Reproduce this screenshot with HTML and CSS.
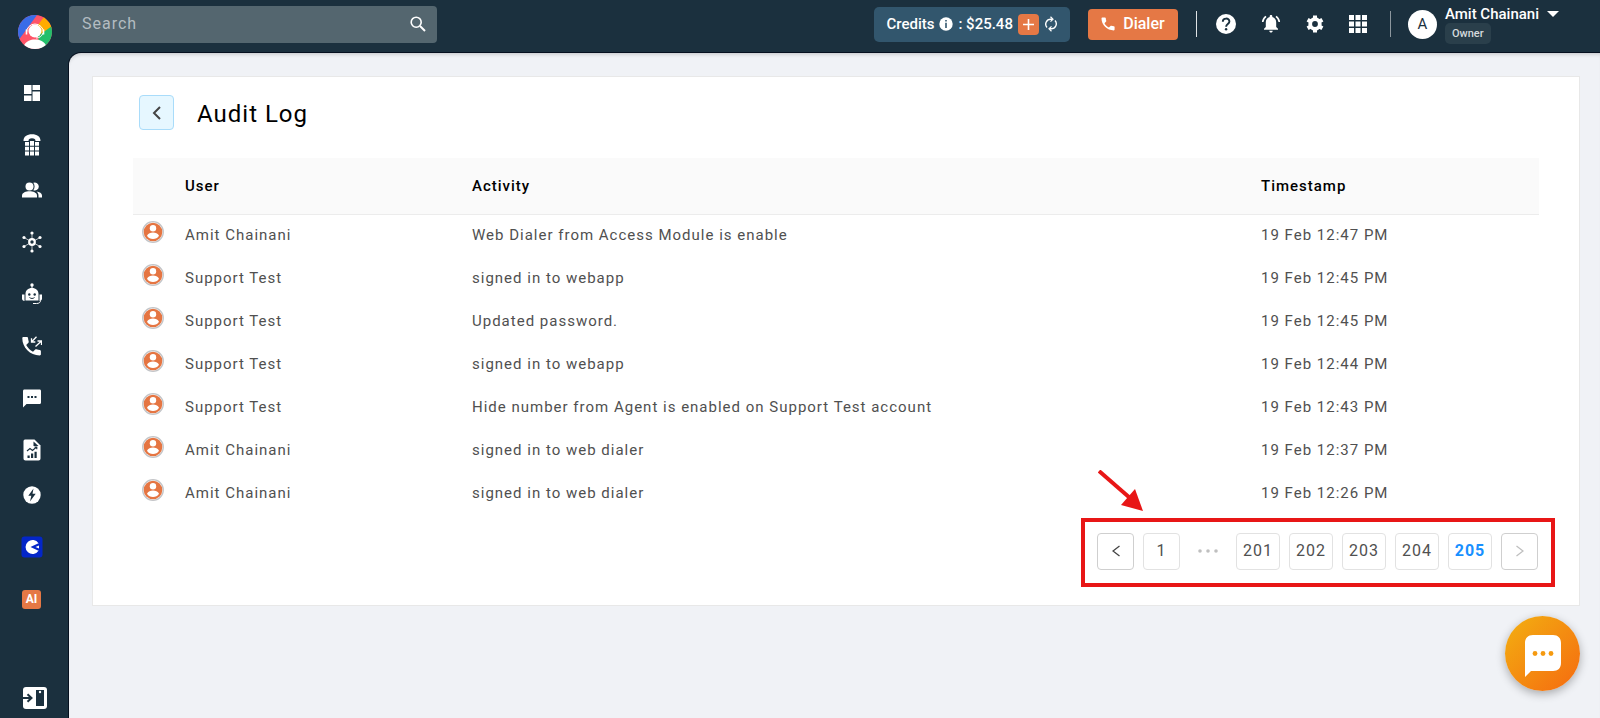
FILE: index.html
```html
<!DOCTYPE html>
<html lang="en">
<head>
    <meta charset="UTF-8">
    <meta name="viewport" content="width=device-width, initial-scale=1">
    <title>Audit Log</title>
    <link rel="stylesheet" href="styles.css">
</head>
<body>
    <!-- shared icons -->
    <svg class="sprite" aria-hidden="true">
        <symbol id="user" viewBox="0 0 22 22">
            <circle cx="11" cy="11" r="10.300" fill="#fff" stroke="#c3c5c8" stroke-width="1.300"/>
            <circle cx="11" cy="11" r="9.300" fill="#e57542"/>
            <circle cx="11" cy="7.200" r="3.200" fill="#fff"/>
            <path d="M5 14.800c1-2.300 3.600-3.200 6-3.200s5 .9 6 3.200c-1.300 2.100-3.500 3.200-6 3.200s-4.700-1.100-6-3.200z" fill="#fff"/>
        </symbol>
    </svg>

    <div class="layout">
        <!-- sidebar -->
        <aside class="sidebar">
            <a class="logo" href="#" aria-label="Home">
                <svg width="34" height="34" viewBox="0 0 34 34">
                    <defs><clipPath id="round"><circle cx="17" cy="17" r="17"/></clipPath></defs>
                    <g clip-path="url(#round)">
                        <path d="M0 0h34v34H0z" fill="#ff5468"/>
                        <path d="M0 0h19L0 26z" fill="#3a6ce8"/>
                        <path d="M26 2l8 8v3L20 22l-3-8z" fill="#ffab00"/>
                        <path d="M34 11v23H22l-2-13z" fill="#23bf6b"/>
                        <path d="M5 34c1-7 6-9.500 12-9.500S28 27 29 34z" fill="#fff"/>
                    </g>
                    <circle cx="17" cy="16" r="6.500" fill="#fff"/>
                    <path d="M8.500 17.500a8.500 8.500 0 0 1 17 0M25 18c-1 3.500-4 5-7 5" fill="none" stroke="#fff" stroke-width="1"/>
                    <path d="M8.500 14.500v5M25.500 14.500v5" stroke="#fff" stroke-width="1.600"/>
                </svg>
            </a>
            <nav class="menu">
                <a href="#" aria-label="Dashboard">
                    <svg width="18" height="18" viewBox="0 0 18 18" fill="#fff"><path d="M1 1h7.500v9H1zM9.500 1H17v5H9.500zM1 11.500h7.500V17H1zM9.500 7.500H17V17H9.500z"/></svg>
                </a>
                <a href="#" aria-label="Numbers">
                    <svg width="18" height="22" viewBox="0 0 18 22" fill="#fff">
                        <path d="M.5 7C.5 2.500 4 .3 9 .3S17.500 2.500 17.500 7h-5c0-1.700-1-2.700-3.500-2.700S5.500 5.300 5.500 7z"/>
                        <path d="M2 8h4v3.800H2zM7 7h4v4.800H7zM12 8h4v3.800h-4zM2 12.800h4v3.700H2zM7 12.800h4v3.700H7zM12 12.800h4v3.700h-4zM2 17.600h4v3.900H2zM7 17.600h4v3.900H7zM12 17.600h4v3.900h-4z"/>
                    </svg>
                </a>
                <a class="close" href="#" aria-label="Users">
                    <svg width="20" height="16" viewBox="0 0 20 16" fill="#fff">
                        <circle cx="7.500" cy="4.500" r="4"/>
                        <path d="M0 15.500v-2c0-2.800 4-4.200 7.500-4.200s7.500 1.400 7.500 4.200v2z"/>
                        <path d="M11.300.8a4 4 0 1 1 0 7.400c1.700-2.300 1.700-5.100 0-7.400zM14.500 9.600c3 .5 5.500 1.800 5.500 3.900v2h-3.500v-2c0-1.700-.8-2.900-2-3.900z"/>
                    </svg>
                </a>
                <a href="#" aria-label="Integrations">
                    <svg width="22" height="22" viewBox="0 0 22 22" stroke="#fff" fill="#fff">
                        <path d="M11 2v18M3 6.500l16 9M3 15.500l16-9" stroke-width=".7"/>
                        <circle cx="11" cy="11" r="2.800" fill="#1b303e" stroke-width="2.200"/>
                        <g stroke="none"><circle cx="11" cy="2" r="1.600"/><circle cx="11" cy="20" r="1.600"/><circle cx="3" cy="6.500" r="1.600"/><circle cx="19" cy="15.500" r="1.600"/><circle cx="3" cy="15.500" r="1.600"/><circle cx="19" cy="6.500" r="1.600"/></g>
                    </svg>
                </a>
                <a href="#" aria-label="Bot">
                    <svg width="20" height="22" viewBox="0 0 20 22" fill="#fff">
                        <circle cx="10" cy="2" r="1.700"/><path d="M9.500 3h1v3h-1z"/>
                        <path d="M3.500 17.500V11C3.500 7.500 6 5 10 5s6.500 2.500 6.500 6v6.500zM0 11.500h2.500V18C1 18 0 17 0 15.800zM17.500 11.500H20v4.300c0 1.200-1 2.200-2.500 2.200z"/>
                        <circle cx="7.300" cy="11.500" r="1.200" fill="#1b303e"/><circle cx="12.700" cy="11.500" r="1.200" fill="#1b303e"/>
                        <path d="M7.500 14.500c1.500 1.300 3.500 1.300 5 0" fill="none" stroke="#1b303e"/>
                        <path d="M18.500 17.500c0 2-1.500 3-4 3H11" fill="none" stroke="#fff"/>
                    </svg>
                </a>
                <a href="#" aria-label="Calls">
                    <svg width="20" height="20" viewBox="0 0 20 20" fill="#fff">
                        <path d="M.3 2.200c0-.7.500-1.200 1.200-1.200h3.300c.6 0 1.100.4 1.200 1 .1 1.300.4 2.400.7 3.500.2.500 0 1-.3 1.300L4.200 9c1.600 3 4 5.300 6.800 6.800l2.200-2.200c.3-.3.8-.4 1.300-.3 1.100.4 2.300.6 3.400.7.600.1 1 .6 1 1.200v3c0 .7-.5 1.200-1.200 1.200C8 19.400.3 11.500.3 2.200z"/>
                        <path d="M14.500.8L9.500 6M9.500 2.200V6h3.800M13.500 10.500l6-5.500M15.500 5h4v4" fill="none" stroke="#fff" stroke-width="1.300"/>
                    </svg>
                </a>
                <a href="#" aria-label="Messages">
                    <svg width="20" height="19" viewBox="0 0 20 19"><path d="M2.500.5h15c1 0 1.500.6 1.500 1.500v11.500c0 .9-.5 1.500-1.500 1.500H4.500L1 18.500V2C1 1.100 1.500.5 2.500.5z" fill="#fff"/><path d="M5.500 7h2v2h-2zM9 7h2v2H9zM12.500 7h2v2h-2z" fill="#1b303e"/></svg>
                </a>
                <a href="#" aria-label="Reports">
                    <svg width="18" height="22" viewBox="0 0 18 22"><path d="M2 .5h9.500l6 6V19.500c0 1.200-.8 2-2 2H2.500c-1.200 0-2-.8-2-2v-17C.5 1.300 1 .5 2 .5z" fill="#fff"/><path d="M10.500 2.500v4.500h5z" fill="#1b303e"/><path d="M4 12l3-2.500 2.500 2L13.500 8M11.500 8h2.300v2.300" fill="none" stroke="#1b303e" stroke-width="1.100"/><path d="M4.500 16.500h2.200V19H4.500zM8 14.500h2.200V19H8zM11.500 12.800h2.200V19h-2.200z" fill="#1b303e"/></svg>
                </a>
                <a class="close" href="#" aria-label="Power">
                    <svg width="18" height="18" viewBox="0 0 18 18"><circle cx="9" cy="9" r="8.700" fill="#fff"/><path d="M10.500 2.500L5.300 9.800h3L7 15.500l5.700-7.800H9.500z" fill="#1b303e"/></svg>
                </a>
                <a href="#" aria-label="Workspace">
                    <svg width="22" height="22" viewBox="0 0 22 22"><rect x=".5" y=".5" width="21" height="21" rx="3" fill="#0426c8"/><path d="M17.500 7.300A7 7 0 1 0 17.500 14.700L12 11z" fill="#fff"/><path d="M10 11l3-2.500 2-1.500h3v8h-3l-2-1.500z" fill="#fff"/><path d="M9.500 11l8.500-4v2.500L14.500 11l3.500 1.500V15z" fill="#0426c8"/></svg>
                </a>
                <a href="#"><span class="ai">AI</span></a>
            </nav>
            <button class="expand" type="button" aria-label="Expand menu">
                <svg width="24" height="22" viewBox="0 0 24 22"><rect width="24" height="22" rx="3" fill="#fff"/><rect x="13" y="3" width="8" height="16" fill="#1b303e"/><circle cx="17" cy="5" r="1.200" fill="#fff"/><path d="M0 11h8M4.500 7.200L8.500 11l-4 3.800" fill="none" stroke="#1b303e" stroke-width="2"/></svg>
            </button>
        </aside>

        <div class="page">
            <!-- top bar -->
            <header class="topbar">
                <form class="search" role="search">
                    <input type="search" placeholder="Search" aria-label="Search">
                    <button type="button" aria-label="Search">
                        <svg width="16" height="16" viewBox="0 0 16 16" fill="none" stroke="#fff"><circle cx="6.200" cy="6.200" r="5" stroke-width="1.600"/><path d="M10 10l5 5" stroke-width="2"/></svg>
                    </button>
                </form>

                <div class="credits">
                    <span>Credits</span>
                    <svg width="14" height="14" viewBox="0 0 14 14"><circle cx="7" cy="7" r="6.700" fill="#fff"/><path d="M6.200 3h1.600v1.600H6.200zM6.200 5.700h1.600V11H6.200z" fill="#32566d"/></svg>
                    <span>: $25.48</span>
                    <button class="add" type="button" aria-label="Add credits">
                        <svg width="13" height="13" viewBox="0 0 13 13" stroke="#fff" stroke-width="1.600"><path d="M6.500 1v11M1 6.500h11"/></svg>
                    </button>
                    <button type="button" aria-label="Refresh">
                        <svg width="14" height="16" viewBox="0 0 14 16" fill="none" stroke="#fff" stroke-width="1.400"><path d="M3 11.500A5 5 0 0 1 7 3.200h1M11 4.500a5 5 0 0 1-4 8.300H6"/><path d="M6.500.8L9 3.200 6.500 5.600M7.500 10.400L5 12.800l2.500 2.400" stroke-width="1.200"/></svg>
                    </button>
                </div>

                <button class="dialer" type="button">
                    <svg width="14" height="14" viewBox="0 0 14 14" fill="#fff"><path d="M.5 1.300C.5.900.8.500 1.300.5H4c.4 0 .7.300.8.700 0 1 .2 1.800.5 2.600.1.300 0 .6-.2.800L3.500 6.200c1.100 2.100 2.500 3.400 4.400 4.400l1.600-1.700c.2-.2.500-.3.800-.2.900.3 1.700.4 2.600.5.400 0 .7.300.7.700v2.700c0 .5-.3.800-.7.800C6 13.400.5 8 .5 1.300z"/></svg>
                    Dialer
                </button>

                <div class="tools">
                    <button type="button" aria-label="Help">
                        <svg width="20" height="20" viewBox="0 0 20 20"><circle cx="10" cy="10" r="10" fill="#fff"/><path d="M6.800 7.800c0-4.300 6.600-4.200 6.600-.3 0 2.500-3.300 2.600-3.300 5.300" fill="none" stroke="#1b303e" stroke-width="1.900"/><circle cx="10.100" cy="15.300" r="1.200" fill="#1b303e"/></svg>
                    </button>
                    <button type="button" aria-label="Notifications">
                        <svg width="20" height="20" viewBox="0 0 20 20" fill="#fff"><path d="M10 1c.8 0 1.300.5 1.300 1.300v.6c2.500.6 3.900 2.700 3.900 5.300v4.800l1.800 1.800v.9H3v-.9L4.800 13V8.200c0-2.600 1.400-4.700 3.900-5.300v-.6C8.700 1.500 9.200 1 10 1zM8.300 16.800h3.400c0 1-.7 1.800-1.700 1.800s-1.700-.8-1.700-1.800z"/><path d="M5 2.300C3 3.800 1.800 5.500 1.700 8M15 2.300c2 1.500 3.200 3.200 3.300 5.700" fill="none" stroke="#fff" stroke-width="1.600"/></svg>
                    </button>
                    <button type="button" aria-label="Settings">
                        <svg width="18" height="18" viewBox="0 0 18 18" fill="none"><circle cx="9" cy="9" r="4.800" stroke="#fff" stroke-width="3.800"/><path d="M9 .5v3M9 14.500v3M1.600 4.800l2.700 1.500M13.700 11.700l2.700 1.500M1.600 13.200l2.700-1.500M13.700 6.300l2.700-1.500" stroke="#fff" stroke-width="4"/></svg>
                    </button>
                    <button type="button" aria-label="Apps">
                        <svg width="18" height="18" viewBox="0 0 18 18" fill="#fff"><path d="M0 0h5v5H0zM6.500 0h5v5h-5zM13 0h5v5h-5zM0 6.500h5v5H0zM6.500 6.500h5v5h-5zM13 6.500h5v5h-5zM0 13h5v5H0zM6.500 13h5v5h-5zM13 13h5v5h-5z"/></svg>
                    </button>
                </div>

                <div class="account">
                    <span class="initial">A</span>
                    <div class="who">
                        <button type="button">Amit Chainani
                            <svg width="12" height="6" viewBox="0 0 12 6" fill="#fff"><path d="M0 0h12L6 6z"/></svg>
                        </button>
                        <span class="role">Owner</span>
                    </div>
                </div>
            </header>

            <!-- content -->
            <main class="main">
                <section class="card">
                    <div class="heading">
                        <button class="back" type="button" aria-label="Back">
                            <svg width="10" height="14" viewBox="0 0 10 14" fill="none" stroke="#444" stroke-width="2"><path d="M8 1L2 7l6 6"/></svg>
                        </button>
                        <h1>Audit Log</h1>
                    </div>

                    <table class="log">
                        <thead>
                            <tr><th class="pic"></th><th class="name">User</th><th>Activity</th><th class="time">Timestamp</th></tr>
                        </thead>
                        <tbody>
                            <tr><td class="pic"><svg width="22" height="22"><use href="#user"/></svg></td><td>Amit Chainani</td><td>Web Dialer from Access Module is enable</td><td>19 Feb 12:47 PM</td></tr>
                            <tr><td class="pic"><svg width="22" height="22"><use href="#user"/></svg></td><td>Support Test</td><td>signed in to webapp</td><td>19 Feb 12:45 PM</td></tr>
                            <tr><td class="pic"><svg width="22" height="22"><use href="#user"/></svg></td><td>Support Test</td><td>Updated password.</td><td>19 Feb 12:45 PM</td></tr>
                            <tr><td class="pic"><svg width="22" height="22"><use href="#user"/></svg></td><td>Support Test</td><td>signed in to webapp</td><td>19 Feb 12:44 PM</td></tr>
                            <tr><td class="pic"><svg width="22" height="22"><use href="#user"/></svg></td><td>Support Test</td><td>Hide number from Agent is enabled on Support Test account</td><td>19 Feb 12:43 PM</td></tr>
                            <tr><td class="pic"><svg width="22" height="22"><use href="#user"/></svg></td><td>Amit Chainani</td><td>signed in to web dialer</td><td>19 Feb 12:37 PM</td></tr>
                            <tr><td class="pic"><svg width="22" height="22"><use href="#user"/></svg></td><td>Amit Chainani</td><td>signed in to web dialer</td><td>19 Feb 12:26 PM</td></tr>
                        </tbody>
                    </table>

                    <nav class="pagination" aria-label="Pages">
                        <svg class="pointer" width="46" height="42" viewBox="0 0 46 42"><path d="M1 1l31 27" stroke="#e81616" stroke-width="4"/><path d="M45 41l-22-6L37 19z" fill="#e81616"/></svg>
                        <button class="step" type="button" aria-label="Previous">
                            <svg width="8" height="12" viewBox="0 0 8 12" fill="none" stroke="#444" stroke-width="1.300"><path d="M7.500 1L1 6l6.500 5"/></svg>
                        </button>
                        <button type="button">1</button>
                        <span class="dots">
                            <svg width="20" height="4" viewBox="0 0 20 4" fill="#bfbfbf"><circle cx="2" cy="2" r="1.800"/><circle cx="10" cy="2" r="1.800"/><circle cx="18" cy="2" r="1.800"/></svg>
                        </span>
                        <button class="wide" type="button">201</button>
                        <button class="wide" type="button">202</button>
                        <button class="wide" type="button">203</button>
                        <button class="wide" type="button">204</button>
                        <button class="wide current" type="button" aria-current="page">205</button>
                        <button class="step" type="button" aria-label="Next" disabled>
                            <svg width="8" height="12" viewBox="0 0 8 12" fill="none" stroke="#bfbfbf" stroke-width="1.300"><path d="M.5 1L7 6 .5 11"/></svg>
                        </button>
                    </nav>
                </section>
            </main>
        </div>
    </div>

    <!-- chat button -->
    <button class="chat" type="button" aria-label="Chat">
        <svg width="36" height="42" viewBox="0 0 36 42"><path d="M8 0h20c5 0 8 3 8 8v20c0 5-3 8-8 8H6l-6 6V8c0-5 3-8 8-8z" fill="#fff"/><g fill="#f59a10"><circle cx="10" cy="18.500" r="2.400"/><circle cx="18" cy="18.500" r="2.400"/><circle cx="26" cy="18.500" r="2.400"/></g></svg>
    </button>
</body>
</html>
```
FILE: styles.css
```css
* {
    box-sizing: border-box;
}

body {
    margin: 0;
    font-family: Roboto, "Liberation Sans", sans-serif;
    font-size: 16px;
    line-height: 22px;
    letter-spacing: 1px;
    color: #505050;
    background: #1b303e;
}

button {
    display: flex;
    align-items: center;
    justify-content: center;
    margin: 0;
    padding: 0;
    border: 0;
    background: none;
    font: inherit;
    letter-spacing: inherit;
    color: inherit;
    cursor: pointer;
}

svg {
    display: block;
    flex: none;
}

.sprite {
    position: absolute;
    width: 0;
    height: 0;
}

.layout {
    display: flex;
    min-height: 100vh;
}

/* sidebar */
.sidebar {
    display: flex;
    flex-direction: column;
    flex: none;
    width: 69px;
    padding: 15px 0 9px;
}
.logo {
    padding-left: 18px;
}
.menu {
    width: 63px;
    margin-top: 18px;
}
.menu a {
    display: flex;
    align-items: center;
    justify-content: center;
    height: 52px;
    text-decoration: none;
}
.menu .close {
    margin-top: -7px;
}
.ai {
    width: 19px;
    border-radius: 3px;
    background: #e57845;
    color: #fff;
    font-size: 12px;
    font-weight: 700;
    line-height: 19px;
    letter-spacing: 0;
    text-align: center;
}
.expand {
    margin-top: auto;
}

.page {
    display: flex;
    flex-direction: column;
    flex: 1;
    min-width: 0;
}

/* top bar */
.topbar {
    display: flex;
    align-items: center;
    height: 53px;
    padding: 0 41px 5px 0;
    color: #fff;
    letter-spacing: 0;
}
.search {
    display: flex;
    align-items: center;
    width: 368px;
    height: 37px;
    margin-right: auto;
    padding: 0 11px 0 13px;
    border-radius: 4px;
    background: #54666f;
}
.search input {
    flex: 1;
    min-width: 0;
    padding: 0;
    border: 0;
    outline: 0;
    background: none;
    font: inherit;
    letter-spacing: 1px;
    color: #fff;
}
.search input::placeholder {
    color: #b3bcc1;
}
.credits {
    display: flex;
    align-items: center;
    gap: 5px;
    height: 35px;
    padding: 0 12px;
    border-radius: 5px;
    background: #32566d;
    font-size: 15px;
    font-weight: 500;
}
.credits .add {
    width: 21px;
    height: 21px;
    border-radius: 4px;
    background: #e57845;
}
.dialer {
    gap: 8px;
    width: 90px;
    height: 31px;
    margin: 0 18px;
    border-radius: 4px;
    background: #e57845;
    font-weight: 500;
}
.tools {
    display: flex;
    align-items: center;
    gap: 25px;
    height: 26px;
    padding: 0 23px 0 19px;
    border-left: 1px solid #dfe3e5;
    border-right: 1px solid #8d979e;
}
.account {
    display: flex;
    align-items: center;
    gap: 8px;
    padding-left: 17px;
}
.initial {
    width: 29px;
    border-radius: 50%;
    background: #fff;
    color: #1b303e;
    font-size: 15px;
    line-height: 29px;
    text-align: center;
}
.who {
    display: flex;
    flex-direction: column;
    align-items: flex-start;
    font-size: 15px;
    font-weight: 500;
    line-height: 18px;
}
.who button {
    gap: 8px;
}
.role {
    padding: 0 7px;
    border-radius: 5px;
    background: #2a3f4b;
    color: #d5dadd;
    font-size: 11px;
    line-height: 21px;
}

/* content */
.main {
    flex: 1;
    padding: 23px 20px 23px 23px;
    border-radius: 12px 0 0 0;
    background: #f0f2f6;
    box-shadow: 0 0 0 1px #06101f, inset 0 4px 4px -3px rgba(0, 0, 0, 0.2);
}
.card {
    padding: 18px 40px;
    border: 1px solid #e8e8e8;
    background: #fff;
}
.heading {
    display: flex;
    align-items: center;
    gap: 23px;
    padding-left: 6px;
}
.back {
    width: 35px;
    height: 35px;
    border: 1px solid #a9dcfa;
    border-radius: 4px;
    background: #e6f7ff;
}
h1 {
    margin: 0;
    padding-top: 3px;
    color: #000;
    font-size: 24px;
    font-weight: 400;
    line-height: 32px;
}

/* log table */
.log {
    width: 100%;
    margin-top: 28px;
    border-collapse: collapse;
    table-layout: fixed;
    font-size: 15px;
}
.log th {
    height: 56px;
    padding: 0;
    border-bottom: 1px solid #ececec;
    background: #fafafa;
    color: #000;
    font-weight: 500;
    text-align: left;
}
.log td {
    height: 43px;
    padding: 9px 0 12px;
    vertical-align: top;
}
.log .pic {
    width: 52px;
    padding: 6px 0 0 9px;
}
.log .name {
    width: 287px;
}
.log .time {
    width: 278px;
}

/* pagination */
.pagination {
    position: relative;
    display: flex;
    align-items: center;
    gap: 9px;
    width: max-content;
    margin: 2px -16px 0 auto;
    padding: 11px 13px 13px 12px;
    border: 4px solid #e81616;
}
.pagination button {
    width: 37px;
    height: 37px;
    border: 1px solid #e2e2e2;
    border-radius: 4px;
}
.pagination .wide {
    width: 44px;
}
.pagination .step {
    border-color: #cfcfcf;
}
.pagination .current {
    color: #1890ff;
    font-weight: 700;
}
.dots {
    display: flex;
    justify-content: center;
    width: 38px;
}
/* arrow over the page buttons */
.pointer {
    position: absolute;
    left: 13px;
    top: -52px;
}

/* chat button */
.chat {
    position: fixed;
    right: 20px;
    bottom: 27px;
    width: 75px;
    height: 75px;
    padding-top: 5px;
    border-radius: 50%;
    background: linear-gradient(135deg, #f3b011, #f56a10);
    box-shadow: 0 3px 10px rgba(0, 0, 0, 0.3);
}
```
